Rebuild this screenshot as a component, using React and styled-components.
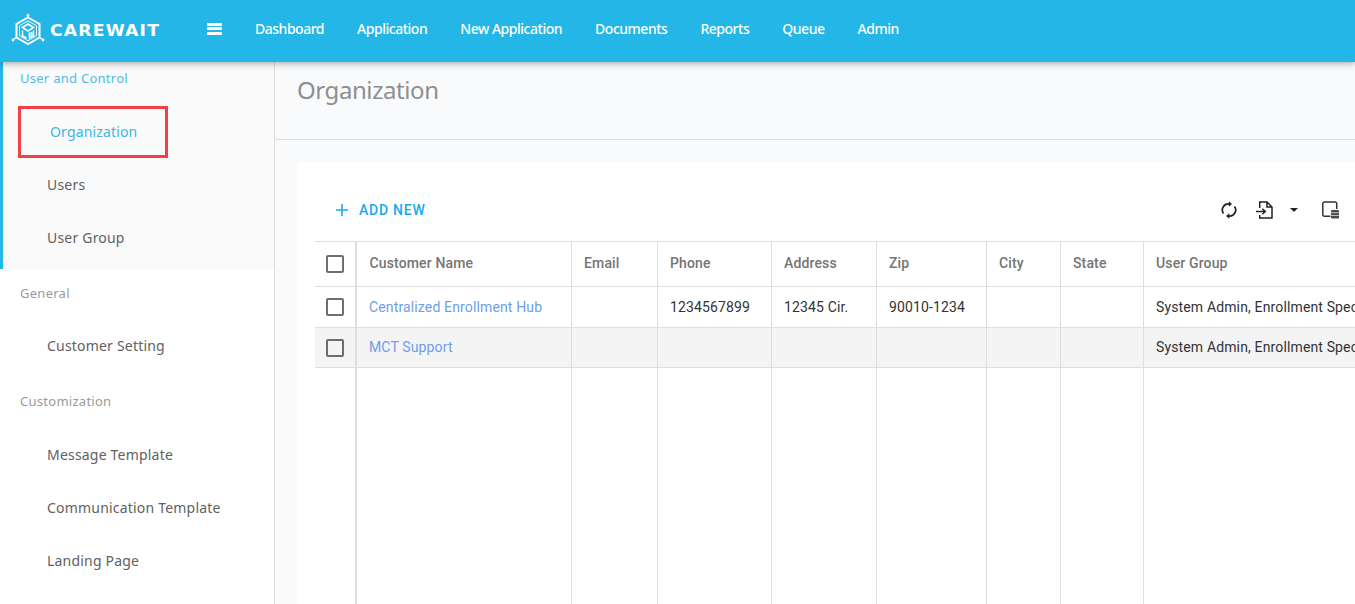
import React from "react";
import styled, { createGlobalStyle } from "styled-components";

const Global = createGlobalStyle`
  html, body { margin: 0; padding: 0; height: 100%; overflow: hidden; background: #fff; }
  * { box-sizing: border-box; }
  #root { height: 604px; overflow: hidden; }
`;

const Page = styled.div`
  width: 1355px;
  height: 604px;
  display: flex;
  flex-direction: column;
  overflow: hidden;
  font-family: "Roboto", "Liberation Sans", sans-serif;
`;

const Header = styled.header`
  height: 62px;
  flex: none;
  background: #23b6e6;
  display: flex;
  align-items: center;
  box-shadow: 0 2px 6px rgba(0, 0, 0, 0.3);
  position: relative;
  z-index: 2;
`;

const Brand = styled.div`
  width: 207px;
  flex: none;
  padding: 0 0 0 11px;
  display: flex;
  align-items: center;
  gap: 5px;
  color: #fff;
`;

const BrandName = styled.span`
  font-family: "DejaVu Sans", sans-serif;
  font-weight: 700;
  font-size: 15px;
  letter-spacing: 1px;
  transform: scaleX(1.15);
  transform-origin: left center;
`;

const Burger = styled.button`
  border: 0;
  background: none;
  padding: 0;
  width: 15px;
  height: 12px;
  display: flex;
  flex-direction: column;
  justify-content: space-between;
  margin: -5px 33px 0 0;
  span { display: block; height: 3px; background: #fff; border-radius: 1px; }
`;

const NavLink = styled.a`
  color: #fff;
  font-family: "Noto Sans", sans-serif;
  font-size: 14px;
  font-weight: 500;
  margin-right: 33px;
  letter-spacing: -0.48px;
  position: relative;
  top: -3px;
`;

const Body = styled.div`
  flex: 1;
  display: flex;
  min-height: 0;
`;

const Sidebar = styled.aside`
  width: 275px;
  flex: none;
  border-right: 1px solid #dcdcdc;
  background: #fff;
  font-family: "Noto Sans", sans-serif;
`;

const ActiveGroup = styled.div`
  height: 207px;
  background: #fafafa;
  border-left: 3px solid #23b6e6;
  padding-top: 6px;
`;

const Group = styled.div`
  padding-top: ${(p) => p.$top || 0}px;
`;

const GroupTitle = styled.div`
  font-size: 13px;
  line-height: 20px;
  letter-spacing: 0.27px;
  margin-bottom: ${(p) => p.$after || 0}px;
  padding-left: ${(p) => (p.$active ? 17 : 20)}px;
  color: ${(p) => (p.$active ? "#4bbde6" : "#9a9a9a")};
`;

const Item = styled.a`
  display: block;
  height: 53px;
  line-height: 53px;
  font-size: 14px;
  letter-spacing: 0.2px;
  padding-left: ${(p) => (p.$indent ? 44 : 47)}px;
  color: #616161;
`;

const SelectedItem = styled.a`
  display: block;
  width: 150px;
  height: 52px;
  line-height: 46px;
  margin: 18px 0 0 15px;
  padding-left: 29px;
  border: 3px solid #f44045;
  font-size: 14px;
  letter-spacing: 0.15px;
  color: #3db5e5;
`;

const Main = styled.main`
  flex: 1;
  min-width: 0;
  background: #f9fafb;
  display: flex;
  flex-direction: column;
`;

const TitleBar = styled.div`
  height: 78px;
  flex: none;
  border-bottom: 1px solid #dcdcdc;
  padding: 11px 0 0 22px;
`;

const Title = styled.h1`
  margin: 0;
  font-family: "Noto Sans", sans-serif;
  font-weight: 400;
  font-size: 24px;
  line-height: 34px;
  letter-spacing: -0.42px;
  color: #8f8f8f;
`;

const Card = styled.section`
  margin: 22px 0 0 22px;
  flex: 1;
  background: #fff;
  border-radius: 4px 0 0 0;
  padding: 0 0 0 18px;
  display: flex;
  flex-direction: column;
  min-height: 0;
  overflow: hidden;
`;

const Toolbar = styled.div`
  height: 79px;
  flex: none;
  display: flex;
  align-items: center;
  justify-content: space-between;
  padding: 17px 16px 0 20px;
`;

const AddNew = styled.button`
  border: 0;
  background: none;
  padding: 0;
  display: flex;
  align-items: center;
  gap: 10px;
  color: #1aa9ef;
  font-family: "Roboto", sans-serif;
  font-weight: 500;
  font-size: 14px;
  letter-spacing: 0.75px;
`;

const Tools = styled.div`
  display: flex;
  align-items: center;
  color: #222;
`;

const ToolIcon = styled.svg`
  display: block;
  margin-left: ${(p) => p.$gap || 0}px;
`;

const Table = styled.table`
  table-layout: fixed;
  border-collapse: collapse;
  width: 1040px;
  flex: none;
  font-size: 14px;
  letter-spacing: 0.14px;
`;

const Th = styled.th`
  height: 45px;
  text-align: left;
  font-weight: 500;
  color: #757575;
  padding: 0 0 2px 12.5px;
  border: 1px solid #dedede;
  border-left: ${(p) => (p.$thick ? "2px solid #dedede" : "1px solid #dedede")};
  &:first-child { border-left: 0; }
  &:last-child { border-right: 0; }
  white-space: nowrap;
  overflow: hidden;
`;

const Td = styled.td`
  height: ${(p) => (p.$alt ? 40 : 41)}px;
  padding: 0 0 1px 12.5px;
  color: #333;
  border: 1px solid #dedede;
  border-left: ${(p) => (p.$thick ? "2px solid #dedede" : "1px solid #dedede")};
  &:first-child { border-left: 0; }
  &:last-child { border-right: 0; }
  white-space: nowrap;
  overflow: hidden;
  background: ${(p) => (p.$alt ? "#f4f4f4" : "transparent")};
`;

const FillerTd = styled.td`
  height: 300px;
  border-left: ${(p) => (p.$thick ? "2px solid #dedede" : "1px solid #dedede")};
  border-right: 1px solid #dedede;
  &:first-child { border-left: 0; }
  &:last-child { border-right: 0; }
`;

const CustomerLink = styled.a`
  color: #6d9eeb;
  margin-left: -0.5px;
`;

const Check = styled.span`
  display: block;
  width: 18px;
  height: 18px;
  margin-left: 11px;
  border: 2px solid #6e6e6e;
  border-radius: 2px;
  background: ${(p) => (p.$alt ? "#f4f4f4" : "#fff")};
`;

const CheckCell = styled(Td)`
  padding: 0;
`;

const CheckHead = styled(Th)`
  padding: 0;
`;

const Logo = () => (
  <svg width="34" height="34" viewBox="0 0 34 34" fill="none" stroke="#fff">
    <path d="M17 3.500 L28.500 10 V23.500 L17 30 L5.500 23.500 V10 Z" strokeWidth="2" />
    <path d="M17 6.800 L25.500 11.800 V21.700 L17 26.700 L8.500 21.700 V11.800 Z" strokeWidth="1" />
    <path d="M11.500 13.500 L17 10 L22.500 13.500 L17 17 Z" strokeWidth="1.600" />
    <path d="M11.500 16.500 V22 L15.500 24 M18.500 18.500 V24 L22.500 22 V16.500 M20.500 18 V22.500" strokeWidth="1.600" />
    <path d="M17 4 V1.500 M28 23 L31.500 25.500 M6 23 L2.500 25.500" strokeWidth="1.200" />
    <circle cx="17" cy="1.500" r="1.400" fill="#fff" stroke="none" />
    <circle cx="32" cy="26" r="1.400" fill="#fff" stroke="none" />
    <circle cx="2" cy="26" r="1.400" fill="#fff" stroke="none" />
  </svg>
);

const nav = ["Dashboard", "Application", "New Application", "Documents", "Reports", "Queue", "Admin"];
const cols = [
  ["Customer Name", 215],
  ["Email", 86],
  ["Phone", 114],
  ["Address", 105],
  ["Zip", 110],
  ["City", 74],
  ["State", 83],
  ["User Group", 212],
];

const rows = [
  { name: "Centralized Enrollment Hub", phone: "1234567899", address: "12345 Cir.", zip: "90010-1234" },
  { name: "MCT Support", phone: "", address: "", zip: "", alt: true },
];

export default function App() {
  return (
    <Page>
      <Global />
      <Header>
        <Brand>
          <Logo />
          <BrandName>CAREWAIT</BrandName>
        </Brand>
        <Burger aria-label="menu"><span /><span /><span /></Burger>
        {nav.map((n) => <NavLink key={n}>{n}</NavLink>)}
      </Header>
      <Body>
        <Sidebar>
          <ActiveGroup>
            <GroupTitle $active>User and Control</GroupTitle>
            <SelectedItem>Organization</SelectedItem>
            <Item $indent>Users</Item>
            <Item $indent>User Group</Item>
          </ActiveGroup>
          <Group $top={14}>
            <GroupTitle $after={16}>General</GroupTitle>
            <Item>Customer Setting</Item>
          </Group>
          <Group $top={19}>
            <GroupTitle $after={17}>Customization</GroupTitle>
            <Item>Message Template</Item>
            <Item>Communication Template</Item>
            <Item>Landing Page</Item>
          </Group>
        </Sidebar>
        <Main>
          <TitleBar><Title>Organization</Title></TitleBar>
          <Card>
            <Toolbar>
              <AddNew>
                <svg width="14" height="14" viewBox="0 0 14 14" stroke="#1aa9ef" strokeWidth="1.600"><path d="M7 1v12M1 7h12" /></svg>
                ADD NEW
              </AddNew>
              <Tools>
                <ToolIcon width="16" height="18" viewBox="0 0 16 18" fill="none" stroke="#222" strokeWidth="1.700">
                  <path d="M2.500 12.500A6 6 0 0 1 8 3h1.500M13.500 5.500A6 6 0 0 1 8 15H6.500" />
                  <path d="M8 .8 10.600 3 8 5.200Z M8 12.800 5.400 15 8 17.200Z" fill="#222" strokeWidth=".6" />
                </ToolIcon>
                <ToolIcon $gap={19} width="17" height="18" viewBox="0 0 17 18" fill="none" stroke="#222" strokeWidth="1.500">
                  <path d="M3.700 7V1H11l5 5v11H3.700v-3M11 1v5h5" />
                  <path d="M0 10.500h9M6.300 7.800l3 2.700-3 2.700" />
                </ToolIcon>
                <ToolIcon $gap={17} width="8" height="4" viewBox="0 0 8 4"><path d="M0 0h8L4 4Z" fill="#222" /></ToolIcon>
                <ToolIcon $gap={24} width="17" height="18" viewBox="0 0 17 18" fill="none">
                  <path d="M8.500 15.200H2.200A1.500 1.500 0 0 1 .8 13.700V2.500A1.500 1.500 0 0 1 2.200 1h11A1.500 1.500 0 0 1 14.700 2.500V8" stroke="#333" strokeWidth="1.500" />
                  <rect x="9" y="9" width="8" height="8.500" rx="1" fill="#4a4a4a" />
                  <path d="M9 11.700h8M9 14.500h8" stroke="#ddd" strokeWidth=".8" />
                </ToolIcon>
              </Tools>
            </Toolbar>
            <Table>
              <colgroup>
                <col style={{ width: 41 }} />
                {cols.map(([c, w]) => <col key={c} style={{ width: w }} />)}
              </colgroup>
              <thead>
                <tr>
                  <CheckHead><Check /></CheckHead>
                  {cols.map(([c], i) => <Th key={c} $thick={i === 0}>{c}</Th>)}
                </tr>
              </thead>
              <tbody>
                {rows.map((r) => (
                  <tr key={r.name}>
                    <CheckCell $alt={r.alt}><Check $alt={r.alt} /></CheckCell>
                    <Td $alt={r.alt} $thick><CustomerLink>{r.name}</CustomerLink></Td>
                    <Td $alt={r.alt} />
                    <Td $alt={r.alt}>{r.phone}</Td>
                    <Td $alt={r.alt}>{r.address}</Td>
                    <Td $alt={r.alt}>{r.zip}</Td>
                    <Td $alt={r.alt} />
                    <Td $alt={r.alt} />
                    <Td $alt={r.alt}>System Admin, Enrollment Specialist</Td>
                  </tr>
                ))}
                <tr>
                  <FillerTd />
                  <FillerTd $thick />
                  {cols.slice(1).map(([c]) => <FillerTd key={c} />)}
                </tr>
              </tbody>
            </Table>
          </Card>
        </Main>
      </Body>
    </Page>
  );
}
